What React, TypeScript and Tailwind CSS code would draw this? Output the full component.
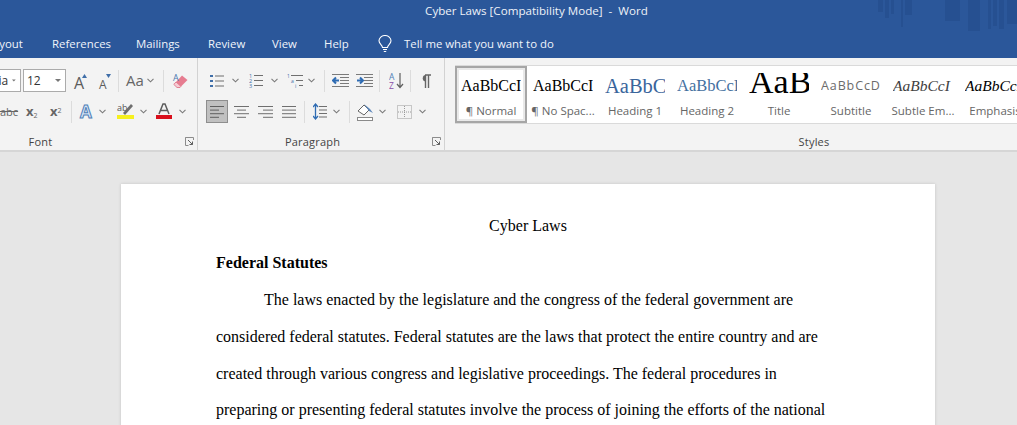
import React from "react";

const B = "#3f6ea8";

function Chev({ className = "" }: { className?: string }) {
  return (
    <svg width="7" height="5" viewBox="0 0 7 5" className={"shrink-0 " + className}>
      <path d="M0.5 0.8 L3.5 3.8 L6.5 0.8" fill="none" stroke="#7a7a7a" strokeWidth="1.1" />
    </svg>
  );
}
function Sep({ className = "" }: { className?: string }) {
  return <div className={"w-px h-[22px] bg-[#dcdcdc] shrink-0 " + className} />;
}
function Lines({ w, className = "", xs, dark = false }: { w: number; className?: string; xs: [number, number][]; dark?: boolean }) {
  return (
    <svg width={w} height="14" viewBox={`0 0 ${w} 14`} className={"shrink-0 " + className}>
      {xs.map(([a, b], i) => (
        <rect key={i} x={a} y={1 + i * 3.6} width={b - a} height="1" fill={dark ? "#5f5f5f" : "#6f6f6f"} />
      ))}
    </svg>
  );
}
function GrowA({ up, big, className = "" }: { up: boolean; big: boolean; className?: string }) {
  return (
    <div className={"relative shrink-0 flex items-end h-[20px] " + (big ? "w-[13px] " : "w-[12px] ") + className}>
      <span className={"leading-none text-[#5c5c5c] font-['Open_Sans',sans-serif] " + (big ? "text-[16px]" : "text-[12px]")}>A</span>
      <svg width="5" height="4" viewBox="0 0 5 4" className="absolute right-0 top-[3px]">
        <path d={up ? "M2.5 0 L5 4 L0 4 Z" : "M0 0 L5 0 L2.5 4 Z"} fill={B} />
      </svg>
    </div>
  );
}
function Launcher() {
  return (
    <svg width="9" height="9" viewBox="0 0 9 9" className="justify-self-end">
      <path d="M0.5 3.5 V0.5 H8.5 V3 M0.5 0.5 V8.5 H3.5" fill="none" stroke="#8c8c8c" />
      <path d="M3 3 L7.5 7.5 M7.5 4.5 V7.5 H4.5" fill="none" stroke="#5f5f5f" />
    </svg>
  );
}
function Label({ text, className = "" }: { text: string; className?: string }) {
  return <span className={"text-[11px] leading-none text-[#444] tracking-[0.2px] " + className}>{text}</span>;
}

const serif = "font-['Liberation_Serif',serif]";
const styles: { preview: string; label: string; cls: string }[] = [
  { preview: "AaBbCcI", label: "¶ Normal", cls: "text-[16px] text-black " + serif },
  { preview: "AaBbCcI", label: "¶ No Spac...", cls: "text-[16px] text-black " + serif },
  { preview: "AaBbC", label: "Heading 1", cls: "text-[20.5px] text-[#3a659c] " + serif },
  { preview: "AaBbCcI", label: "Heading 2", cls: "text-[16.5px] text-[#44709f] " + serif },
  { preview: "AaB", label: "Title", cls: "text-[34px] text-black pb-[8px] " + serif },
  { preview: "AaBbCcD", label: "Subtitle", cls: "text-[12.5px] tracking-[0.9px] text-[#6b6b6b] font-['Open_Sans',sans-serif]" },
  { preview: "AaBbCcI", label: "Subtle Em...", cls: "text-[15.5px] italic text-[#404040] " + serif },
  { preview: "AaBbCcI", label: "Emphasis", cls: "text-[15.5px] italic text-black " + serif },
];

const paragraphs = [
  "The laws enacted by the legislature and the congress of the federal government are",
  "considered federal statutes. Federal statutes are the laws that protect the entire country and are",
  "created through various congress and legislative proceedings. The federal procedures in",
  "preparing or presenting federal statutes involve the process of joining the efforts of the national",
];

export default function App() {
  return (
    <div className="w-[1017px] h-[425px] overflow-hidden bg-[#e6e6e6] flex flex-col font-['Open_Sans',sans-serif]">
      {/* Title bar */}
      <div className="relative h-[58px] shrink-0 bg-[#2b579a] overflow-hidden text-white">
        <svg width="140" height="32" viewBox="0 0 140 32" className="absolute left-[877px] top-0">
          <g fill="#1f4784" opacity="0.4">
            <rect x="1" y="0" width="5" height="12" />
            <rect x="8" y="0" width="4" height="18" />
            <rect x="14" y="0" width="3" height="14" />
            <rect x="24" y="0" width="2" height="27" />
            <rect x="28" y="0" width="7" height="15" />
            <rect x="68" y="0" width="15" height="21" />
            <rect x="91" y="0" width="12" height="31" />
            <rect x="111" y="0" width="3" height="29" />
            <rect x="116" y="0" width="4" height="26" />
            <rect x="122" y="0" width="5" height="29" />
            <rect x="130" y="0" width="10" height="24" />
          </g>
        </svg>
        <div className="h-[21px] flex items-center justify-center">
          <span className="text-[11.6px] leading-none whitespace-pre ml-[56px] text-[#eef2f8]">Cyber Laws [Compatibility Mode]  -  Word</span>
        </div>
        <div className="h-[37px] flex items-center pt-[9px] text-[11.4px] text-[#f0f4fa] whitespace-nowrap">
          <span className="ml-[-13px] w-[65px] shrink-0">Layout</span>
          <span className="w-[84px] shrink-0">References</span>
          <span className="w-[72px] shrink-0">Mailings</span>
          <span className="w-[64px] shrink-0">Review</span>
          <span className="w-[52px] shrink-0">View</span>
          <span className="w-[54px] shrink-0">Help</span>
          <svg width="14" height="18" viewBox="0 0 14 18" className="shrink-0">
            <path d="M4.5 12.5 C4.5 10 1 9 1 5.8 A6 5.3 0 0 1 13 5.8 C13 9 9.5 10 9.5 12.5 Z M5 14.5 H9 M5.8 16.5 H8.2" fill="none" stroke="#fff" strokeWidth="1.1" />
          </svg>
          <span className="ml-[12px]">Tell me what you want to do</span>
        </div>
      </div>

      {/* Ribbon */}
      <div className="h-[94px] shrink-0 bg-[#f3f3f3] border-b-2 border-[#d6d6d6] flex">
        {/* Font */}
        <div className="w-[313px] ml-[-115px] shrink-0 flex flex-col pt-[11px] pb-[3px] border-r border-[#d2d2d2] pr-[3px]">
          <div className="flex items-center h-[23px]">
            <div className="ml-[75px] w-[61px] h-[23px] shrink-0 bg-white border border-[#ababab] flex items-center justify-end pr-[4px] text-[12px] text-[#333]">
              <span className="mr-[4px]">Cambria</span>
              <svg width="6" height="3" viewBox="0 0 6 3"><path d="M0 0 H6 L3 3 Z" fill="#777" /></svg>
            </div>
            <div className="ml-[2px] w-[43px] h-[23px] shrink-0 bg-white border border-[#ababab] flex items-center justify-between px-[3px] text-[12px] text-[#333]">
              <span>12</span>
              <svg width="6" height="3" viewBox="0 0 6 3" className="mr-[1px]"><path d="M0 0 H6 L3 3 Z" fill="#777" /></svg>
            </div>
            <GrowA up big className="ml-[8px]" />
            <GrowA up={false} big={false} className="ml-[12px]" />
            <Sep className="ml-[7px]" />
            <span className="ml-[7px] w-[18px] text-[15px] leading-none text-[#666]">Aa</span>
            <Chev className="ml-[3px]" />
            <Sep className="ml-[9px]" />
            <svg width="16" height="16" viewBox="0 0 16 16" className="ml-[8px]">
              <path d="M4 9 L10 2.5 L15.5 7 L9 13.5 Z" fill="#e67c90" />
              <path d="M4 9 L1.8 11.4 L5 14.5 L8 14.5 L9 13.5 Z" fill="#f6ccd4" stroke="#dc6a80" strokeWidth="0.8" />
              <text x="1" y="8" fontSize="9" fill="#4b79b0" fontFamily="Open Sans, sans-serif">A</text>
            </svg>
          </div>
          <div className="flex items-center h-[23px] mt-[8px]">
            <span className="ml-[115px] w-[16px] text-[11px] leading-none line-through text-[#666]">abc</span>
            <span className="ml-[10px] w-[12px] text-[13px] leading-none font-bold text-[#666]">x<sub className="text-[7px] font-normal">2</sub></span>
            <span className="ml-[12px] w-[12px] text-[13px] leading-none font-bold text-[#666]">x<sup className="text-[7px] font-normal">2</sup></span>
            <Sep className="ml-[9px]" />
            <span className="ml-[8px] w-[13px] text-[17px] leading-none font-bold text-[#d6e4f5] [-webkit-text-stroke:1px_#4f7fb8]">A</span>
            <Chev className="ml-[6px]" />
            <svg width="17" height="19" viewBox="0 0 17 19" className="ml-[11px]">
              <text x="0" y="9" fontSize="9" fill="#555" fontFamily="Open Sans, sans-serif">ab</text>
              <path d="M6 11 L14 2 L16 4 L8 13 Z" fill="#6e6e6e" />
              <rect x="0" y="13" width="17" height="4" fill="#f6f01e" />
            </svg>
            <Chev className="ml-[6px]" />
            <svg width="16" height="19" viewBox="0 0 16 19" className="ml-[9px]">
              <path d="M3 12 L7 2 H9 L13 12 M4.8 8.5 H11.2" fill="none" stroke="#5c5c5c" strokeWidth="1.5" />
              <rect x="0" y="13" width="16" height="4" fill="#d90f1c" />
            </svg>
            <Chev className="ml-[7px]" />
          </div>
          <div className="mt-auto grid grid-cols-[1fr_auto_1fr] items-center h-[12px]">
            <span />
            <Label text="Font" className="ml-[2px]" />
            <Launcher />
          </div>
        </div>

        {/* Paragraph */}
        <div className="w-[247px] shrink-0 flex flex-col pt-[11px] pb-[3px] border-r border-[#d2d2d2] pr-[3px]">
          <div className="flex items-center h-[23px]">
            <svg width="14" height="14" viewBox="0 0 14 14" className="ml-[12px] shrink-0">
              <g fill={B}><rect x="0" y="1" width="3" height="2" /><rect x="0" y="6" width="3" height="2" /><rect x="0" y="11" width="3" height="2" /></g>
              <g fill="#6f6f6f"><rect x="5" y="1.5" width="9" height="1" /><rect x="5" y="6.5" width="9" height="1" /><rect x="5" y="11.5" width="9" height="1" /></g>
            </svg>
            <Chev className="ml-[8px]" />
            <svg width="14" height="15" viewBox="0 0 14 15" className="ml-[10px] shrink-0">
              <g fill={B} fontSize="5.5" fontFamily="Open Sans, sans-serif"><text x="0" y="5">1</text><text x="0" y="10">2</text><text x="0" y="15">3</text></g>
              <g fill="#6f6f6f"><rect x="5" y="2" width="9" height="1" /><rect x="5" y="7" width="9" height="1" /><rect x="5" y="12" width="9" height="1" /></g>
            </svg>
            <Chev className="ml-[8px]" />
            <svg width="16" height="15" viewBox="0 0 16 15" className="ml-[9px] shrink-0">
              <g fill={B} fontSize="5" fontFamily="Open Sans, sans-serif"><text x="0" y="5">1</text><text x="4" y="10">a</text><text x="8" y="15">i</text></g>
              <g fill="#6f6f6f"><rect x="4" y="2" width="12" height="1" /><rect x="9" y="7" width="7" height="1" /><rect x="12" y="12" width="4" height="1" /></g>
            </svg>
            <Chev className="ml-[5px]" />
            <Sep className="ml-[9px]" />
            <svg width="17" height="13" viewBox="0 0 17 13" className="ml-[7px] shrink-0">
              <path d="M7 6.5 H1 M4 3.5 L1 6.5 L4 9.5" fill="none" stroke="#2f6cb3" strokeWidth="2" />
              <g fill="#7a7a7a"><rect x="0" y="0" width="17" height="1" /><rect x="8" y="3" width="9" height="1" /><rect x="8" y="6" width="9" height="1" /><rect x="8" y="9" width="9" height="1" /><rect x="0" y="12" width="17" height="1" /></g>
            </svg>
            <svg width="17" height="13" viewBox="0 0 17 13" className="ml-[7px] shrink-0">
              <path d="M1 6.5 H7 M4 3.5 L7 6.5 L4 9.5" fill="none" stroke="#2f6cb3" strokeWidth="2" />
              <g fill="#7a7a7a"><rect x="0" y="0" width="17" height="1" /><rect x="8" y="3" width="9" height="1" /><rect x="8" y="6" width="9" height="1" /><rect x="8" y="9" width="9" height="1" /><rect x="0" y="12" width="17" height="1" /></g>
            </svg>
            <Sep className="ml-[6px]" />
            <svg width="15" height="17" viewBox="0 0 15 17" className="ml-[9px] shrink-0">
              <text x="0" y="8" fontSize="8.5" fill="#4f7fb8" fontFamily="Open Sans, sans-serif">A</text>
              <text x="0" y="16.5" fontSize="8.5" fill="#8a4fa8" fontFamily="Open Sans, sans-serif">Z</text>
              <path d="M11 1 V15 M8 12 L11 15.5 L14 12" fill="none" stroke="#5f5f5f" strokeWidth="1.2" />
            </svg>
            <Sep className="ml-[6px]" />
            <svg width="10" height="14" viewBox="0 0 10 14" className="ml-[10px] shrink-0">
              <path d="M4 1 H10 M4.5 1 V14 M7.5 1 V14" fill="none" stroke="#666" strokeWidth="1.4" />
              <path d="M5 1 A3 3 0 0 0 5 7.5 Z" fill="#666" />
            </svg>
          </div>
          <div className="flex items-center h-[23px] mt-[8px]">
            <div className="ml-[8px] w-[22px] h-[23px] shrink-0 bg-[#c0c0c0] border border-[#8e8e8e] flex items-center justify-center">
              <Lines w={14} xs={[[0, 14], [0, 9], [0, 14], [0, 9]]} dark />
            </div>
            <Lines w={15} className="ml-[6px]" xs={[[0, 15], [3, 12], [0, 15], [3, 12]]} />
            <Lines w={15} className="ml-[9px]" xs={[[0, 15], [5, 15], [0, 15], [5, 15]]} />
            <Lines w={14} className="ml-[9px]" xs={[[0, 14], [0, 14], [0, 14], [0, 14]]} />
            <Sep className="ml-[8px]" />
            <svg width="14" height="17" viewBox="0 0 14 17" className="ml-[8px] shrink-0">
              <path d="M2.5 1 V16 M0 4 L2.5 1 L5 4 M0 13 L2.5 16 L5 13" fill="none" stroke="#2f6cb3" strokeWidth="1.3" />
              <g fill="#6f6f6f"><rect x="6" y="3" width="8" height="1" /><rect x="6" y="6.5" width="8" height="1" /><rect x="6" y="10" width="8" height="1" /><rect x="6" y="13.5" width="8" height="1" /></g>
            </svg>
            <Chev className="ml-[6px]" />
            <Sep className="ml-[9px]" />
            <svg width="16" height="18" viewBox="0 0 16 18" className="ml-[7px] shrink-0">
              <path d="M1 8 L7 2 L12 7 L7 12 Z" fill="#fff" stroke="#666" />
              <path d="M7 1 L13 6 L16 10 L12 8 Z" fill="#5b86bb" />
              <rect x="0.5" y="14.5" width="15" height="3" fill="#fff" stroke="#8a8a8a" />
            </svg>
            <Chev className="ml-[6px]" />
            <svg width="15" height="14" viewBox="0 0 15 14" className="ml-[11px] shrink-0">
              <rect x="0.5" y="0.5" width="14" height="13" fill="none" stroke="#9a9a9a" strokeDasharray="1 1" />
              <path d="M7.5 1 V13 M1 7 H14" stroke="#9a9a9a" strokeDasharray="1 1" />
            </svg>
            <Chev className="ml-[7px]" />
          </div>
          <div className="mt-auto grid grid-cols-[1fr_auto_1fr] items-center h-[12px]">
            <span />
            <Label text="Paragraph" className="mr-[14px]" />
            <Launcher />
          </div>
        </div>

        {/* Styles */}
        <div className="w-[738px] shrink-0 flex flex-col pt-[7px] pb-[3px]">
          <div className="ml-[10px] h-[59px] bg-white border-y border-[#dadada] flex">
            {styles.map((s, i) => (
              <div
                key={s.label}
                className={
                  "w-[72px] shrink-0 flex flex-col items-center overflow-hidden border-2 " +
                  (i === 0 ? "border-[#a6a6a6] bg-white shadow-[inset_0_0_0_2px_#e9e9e9]" : "border-transparent")
                }
              >
                <div className={"mt-[5px] w-[60px] h-[26px] flex items-center justify-start overflow-hidden whitespace-nowrap leading-none " + s.cls}>
                  {s.preview}
                </div>
                <div className="mt-[6px] text-[11.5px] leading-none text-[#666] whitespace-nowrap">{s.label}</div>
              </div>
            ))}
          </div>
          <div className="mt-auto flex justify-center h-[12px] items-center">
            <Label text="Styles" />
          </div>
        </div>
      </div>

      {/* Document */}
      <div className="flex-1 min-h-0 pt-[32px]">
        <div className="ml-[121px] w-[814px] bg-white shadow-[0_0_3px_rgba(0,0,0,0.15)] pl-[95px] pr-[95px] pt-[24.4px] font-['Liberation_Serif',serif] text-[16px] leading-[36.8px] text-black whitespace-nowrap h-[400px]">
          <p className="text-center">Cyber Laws</p>
          <p className="font-bold">Federal Statutes</p>
          <p className="indent-[48px]">{paragraphs[0]}</p>
          <p>{paragraphs[1]}</p>
          <p>{paragraphs[2]}</p>
          <p>{paragraphs[3]}</p>
        </div>
      </div>
    </div>
  );
}
